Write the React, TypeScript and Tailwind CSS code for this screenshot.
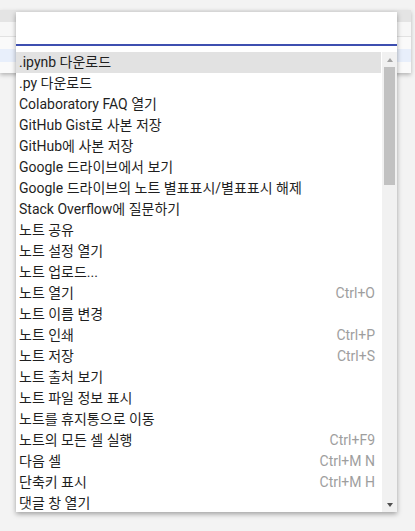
import React from "react";

const items: [string, string?][] = [
  [".ipynb 다운로드"],
  [".py 다운로드"],
  ["Colaboratory FAQ 열기"],
  ["GitHub Gist로 사본 저장"],
  ["GitHub에 사본 저장"],
  ["Google 드라이브에서 보기"],
  ["Google 드라이브의 노트 별표표시/별표표시 해제"],
  ["Stack Overflow에 질문하기"],
  ["노트 공유"],
  ["노트 설정 열기"],
  ["노트 업로드..."],
  ["노트 열기", "Ctrl+O"],
  ["노트 이름 변경"],
  ["노트 인쇄", "Ctrl+P"],
  ["노트 저장", "Ctrl+S"],
  ["노트 출처 보기"],
  ["노트 파일 정보 표시"],
  ["노트를 휴지통으로 이동"],
  ["노트의 모든 셀 실행", "Ctrl+F9"],
  ["다음 셀", "Ctrl+M N"],
  ["단축키 표시", "Ctrl+M H"],
  ["댓글 창 열기"],
];

export default function App() {
  return (
    <div
      className="relative w-[415px] h-[531px] overflow-hidden bg-[#f3f3f3]"
      style={{ fontFamily: 'Roboto, "Noto Sans CJK KR", sans-serif' }}
    >
      {/* background content */}
      <div className="h-[10px]" />
      <div className="w-[411px] flex flex-col shadow-[0_2px_4px_rgba(0,0,0,0.25)]">
        <div className="h-[12px] bg-[#e4e4e4]" />
        <div className="h-[15px] bg-[#f7f7f7] border-b border-[#e2e2e2]" />
        <div className="h-[12px] bg-[#fafafa]" />
        <div className="h-[13px] bg-[#e8effb]" />
        <div className="h-[11px] bg-[#fafafa]" />
      </div>

      {/* dialog */}
      <div className="absolute left-[16px] top-[12px] w-[381px] h-[500px] bg-white flex flex-col shadow-[0_2px_5px_rgba(0,0,0,0.35)]">
        <div className="h-[34px] border-b-2 border-[#3d4fb0] shrink-0" />
        <div className="flex-1 flex pt-[6px] min-h-0">
          <div className="flex-1 overflow-hidden">
            {items.map(([label, sc], i) => (
              <div
                key={i}
                className={`h-[21px] flex items-center justify-between pl-[3px] pr-[6px] text-[14px] leading-[21px] whitespace-nowrap ${
                  i === 0 ? "bg-[#e2e2e2]" : ""
                }`}
              >
                <span className="text-[#1f1f1f]">{label}</span>
                {sc && <span className="text-[#9e9e9e]">{sc}</span>}
              </div>
            ))}
          </div>
          <div className="w-[15px] ml-px bg-[#f1f1f1] flex flex-col items-center">
            <div className="h-[15px] flex items-center justify-center">
              <div className="w-0 h-0 border-l-[3.5px] border-r-[3.5px] border-b-[4px] border-l-transparent border-r-transparent border-b-[#a3a3a3]" />
            </div>
            <div className="w-[11px] h-[118px] bg-[#c1c1c1]" />
            <div className="flex-1" />
            <div className="h-[15px] flex items-center justify-center">
              <div className="w-0 h-0 border-l-[3.5px] border-r-[3.5px] border-t-[4px] border-l-transparent border-r-transparent border-t-[#505050]" />
            </div>
          </div>
        </div>
      </div>
    </div>
  );
}
